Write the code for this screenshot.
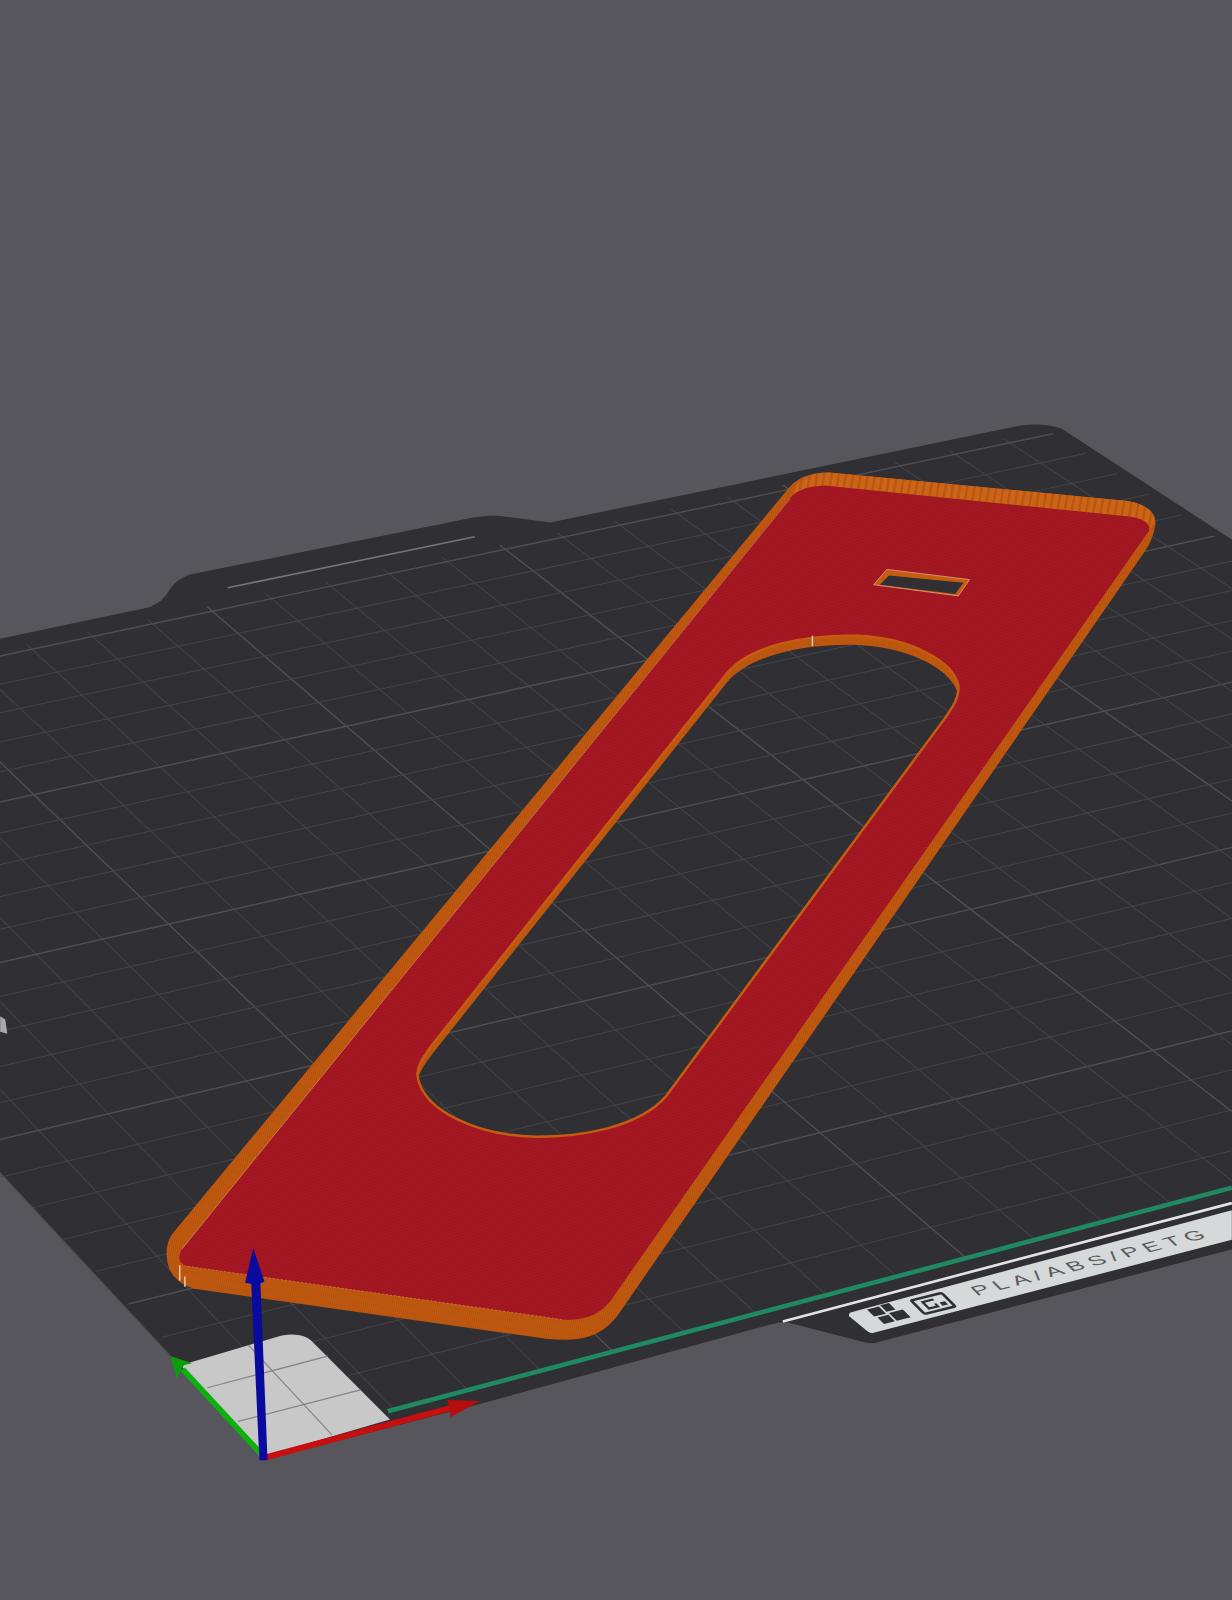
type P = [number, number];

// Projective map from plate space (unit square) to the picture.
const O: P = [258, 1430];
const X: P = [1940, 996];
const F: P = [1030, 410];
const Y: P = [-402, 711];

function makeHomography() {
  const [x0, y0] = O, [x1, y1] = X, [x2, y2] = F, [x3, y3] = Y;
  const dx1 = x1 - x2, dx2 = x3 - x2, sx = x0 - x1 + x2 - x3;
  const dy1 = y1 - y2, dy2 = y3 - y2, sy = y0 - y1 + y2 - y3;
  const det = dx1 * dy2 - dx2 * dy1;
  const g = (sx * dy2 - dx2 * sy) / det;
  const h = (dx1 * sy - sx * dy1) / det;
  const a = x1 - x0 + g * x1, b = x3 - x0 + h * x3, c = x0;
  const d = y1 - y0 + g * y1, e = y3 - y0 + h * y3, f = y0;
  return (u: number, v: number): P => {
    const w = g * u + h * v + 1;
    return [(a * u + b * v + c) / w, (d * u + e * v + f) / w];
  };
}

const project = makeHomography();
const CELLS = 25;

function gridLines() {
  const lines: { p: P; q: P; major: boolean }[] = [];
  for (let i = -5; i <= CELLS + 5; i++) {
    const major = ((i % 5) + 5) % 5 === 0;
    const u = (i - 0.1) / CELLS;
    const v = (i - 0.6) / CELLS;
    lines.push({ p: project(u, -0.1), q: project(u, 1.1), major });
    lines.push({ p: project(-0.1, v), q: project(1.1, v), major });
  }
  return lines;
}

const bed =
  "M -5 627 L 146 595 Q 160 590 166 578 Q 172 568 186 563 L 465 507 Q 480 504 500 507 L 539 512 L 1000 417 Q 1022 414 1040 420 L 1212 532 L 1212 1223 L 858 1316 Q 851 1317 845 1315 L 772 1296 Q 764 1295 755 1298 L 470 1376 L 258 1431 L 167 1329 L -5 1144 Z";

const gridClip =
  "M -5 638 L 1008 425 Q 1028 421 1040 428 L 1212 540 L 1212 1163 L 380 1383 L 320 1329 L 183 1334 L 170 1322 L -5 1148 Z";

const hole = (d: number) =>
  `M 425 ${1022 + d} L 712 ${660 + d} C 735 ${632 + d} 790 ${622 + d} 840 ${623 + d} C 895 ${625 + d} 935 ${650 + d} 939 ${672 + d} C 940 ${685 + d} 932 ${695 + d} 925 ${705 + d} L 652 ${1075 + d} C 625 ${1105 + d} 570 ${1114 + d} 525 ${1114 + d} C 470 ${1113 + d} 415 ${1090 + d} 409 ${1055 + d} C 408 ${1045 + d} 415 ${1035 + d} 425 ${1022 + d} Z`;

const outer =
  "M 773 478 Q 785 463 812 463 L 1105 491 Q 1135 497 1132 515 Q 1130 528 1122 540 L 608 1285 Q 590 1313 555 1313 Q 545 1313 535 1312 L 190 1263 Q 163 1255 163 1228 Q 163 1218 168 1210 Z";

const face =
  "M 776 486 Q 788 475 810 476 L 1104 506 Q 1128 509 1126 520 L 598 1275 Q 582 1296 550 1293 L 184 1241 Q 172 1238 177 1226 Z";

const topBand = "M 780 476 Q 790 463 812 463 L 1105 491 Q 1132 496 1131 512 L 1126 520 Q 1128 509 1104 506 L 810 476 Q 792 475 778 486 Z";

export default function App() {
  return (
    <div className="w-[1232px] h-[1600px] bg-[#56565c] overflow-hidden">
      <svg viewBox="0 0 1207 1568" className="block w-[1232px] h-[1600px]">
        <defs>
          <clipPath id="grid-clip">
            <path d={gridClip} />
          </clipPath>
          <pattern id="hatch" width="3" height="3" patternUnits="userSpaceOnUse" patternTransform="rotate(-14)">
            <rect width="3" height="3" fill="#a51722" />
            <rect width="3" height="1" fill="#9b1520" />
          </pattern>
          <pattern id="rib" width="7" height="7" patternUnits="userSpaceOnUse" patternTransform="rotate(10)">
            <rect width="7" height="7" fill="#cc6517" />
            <rect width="2.5" height="7" fill="#bb5711" />
          </pattern>
          <pattern id="wall" width="2" height="2" patternUnits="userSpaceOnUse" patternTransform="rotate(8)">
            <rect width="2" height="2" fill="#c0580f" />
            <rect width="0.7" height="2" fill="#b5520e" />
          </pattern>
        </defs>

        {/* build plate */}
        <path d={bed} fill="#2f2f34" />
        <g clipPath="url(#grid-clip)">
          {gridLines().map((l, i) => (
            <line
              key={i}
              x1={l.p[0]}
              y1={l.p[1]}
              x2={l.q[0]}
              y2={l.q[1]}
              stroke={l.major ? "#4e4f56" : "#434449"}
              strokeWidth={l.major ? 1.4 : 1}
            />
          ))}
        </g>
        <path d="M -5 1144 L 167 1329" stroke="#4d4d53" strokeWidth="1.2" fill="none" />
        <path d="M 223 576 L 465 526" stroke="#74757a" strokeWidth="1.6" fill="none" />
        <path d="M 0 996 L 5 999 L 7 1013 L 0 1011 Z" fill="#a9aaad" />

        {/* print-bed markings */}
        <path d="M 380 1383 L 1207 1164" stroke="#1f8a62" strokeWidth="4.5" fill="none" />
        <path d="M 767 1295 L 1207 1179" stroke="#e2e4e4" strokeWidth="2.6" fill="none" />
        <path d="M 834 1286 L 1207 1186 L 1207 1215 L 856 1306 Q 852 1307 849 1304 L 832 1290 Q 831 1287 834 1286 Z" fill="#d6d9d9" />

        <g transform="matrix(0.97 -0.24 0.7 0.7 848.5 1283.5)" fill="#2f2f34">
          <rect x="1" y="0" width="12" height="10" />
          <rect x="15" y="-1" width="9" height="9" />
          <rect x="16" y="10" width="14" height="11" />
          <rect x="3" y="12" width="11" height="9" />
        </g>
        <g transform="matrix(0.97 -0.24 0.7 0.7 891 1274)" fill="none" stroke="#2f2f34">
          <rect x="1" y="1" width="31" height="19" rx="2" strokeWidth="3" />
          <path d="M 20 6 L 9 6 L 9 15 L 18 15 L 18 11" strokeWidth="2.6" />
          <rect x="23" y="12" width="4" height="3" fill="#2f2f34" strokeWidth="1.4" />
        </g>
        <text
          transform="matrix(2 -0.505 1.015 1.015 957 1270)"
          x="0"
          y="0"
          fontSize="11.5"
          textLength="113"
          lengthAdjust="spacing"
          fill="#5a5c5d"
          className="font-['Liberation_Sans']"
        >
          PLA/ABS/PETG
        </text>

        {/* origin square */}
        <path d="M 255 1428 L 177 1338 L 275 1309 Q 295 1305 305 1314 L 382 1391 Z" fill="#c8c8c8" />
        <g stroke="#85858a" strokeWidth="1.2" fill="none">
          <path d="M 203 1360 L 321 1329" />
          <path d="M 233 1393 L 353 1362" />
          <path d="M 243 1318 L 325 1406" />
        </g>

        {/* printed part */}
        <path d={`${outer} ${hole(9)}`} fill="url(#wall)" fillRule="evenodd" />
        <path d={topBand} fill="url(#rib)" />
        <path d={`${face} ${hole(0)}`} fill="url(#hatch)" fillRule="evenodd" />
        <path d={hole(0)} fill="none" stroke="#c65c10" strokeWidth="2.4" />
        <path d="M 178 1224 L 774 489" stroke="#d9a58c" strokeWidth="0.7" opacity="0.6" fill="none" />
        <path d="M 184 1241 L 550 1293" stroke="#e8b08c" strokeWidth="0.7" strokeDasharray="2 2" opacity="0.6" fill="none" />
        <path d="M 796 623 L 796 633" stroke="#f0e4dc" strokeWidth="1.2" />
        <path d="M 176 1240 L 176 1255 M 181 1251 L 181 1261" stroke="#f0e4dc" strokeWidth="1.2" />

        {/* slot */}
        <path d="M 869 558 L 950 568 L 939 584 L 856 573 Z" fill="#c65c10" />
        <path d="M 871 564 L 944 571 L 936 582 L 862 573 Z" fill="#2f2f34" />
        <path d="M 869 558 L 950 568 L 939 584 L 856 573 Z" fill="none" stroke="#d8a284" strokeWidth="0.8" />

        {/* axes */}
        <path d="M 179 1342 L 255 1424" stroke="#0db10d" strokeWidth="5.5" fill="none" />
        <path d="M 167 1329 L 188 1336 L 180 1338 L 173 1351 Z" fill="#0c9c0c" />
        <path d="M 261 1428 L 441 1380" stroke="#c80f0f" strokeWidth="6" fill="none" />
        <path d="M 470 1373 L 438 1372 L 441 1380 L 441 1389 Z" fill="#b80d0d" />
        <path d="M 254 1431 L 262 1431 L 255 1257 L 246 1257 Z" fill="#0a0a9e" />
        <path d="M 248 1223 L 259 1256 L 251 1259 L 240 1257 Z" fill="#0a0a9e" />
      </svg>
    </div>
  );
}
